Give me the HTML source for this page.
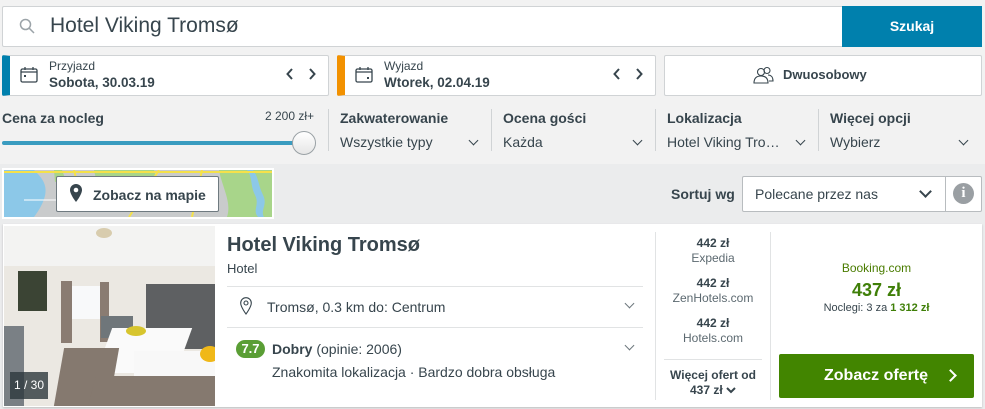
<!DOCTYPE html>
<html><head><meta charset="utf-8"><style>
*{box-sizing:border-box;margin:0;padding:0}
body{width:985px;height:409px;overflow:hidden;background:#ebeced;font-family:"Liberation Sans",sans-serif;color:#37454d;position:relative}
.a{position:absolute}
.top{left:0;top:0;width:985px;height:164px;background:#f2f2f2}
.box{background:#fff;border:1px solid #d0d3d5;border-radius:2px}
.lbl{font-size:14px;font-weight:bold;color:#37454d}
.val{font-size:14px;color:#37454d}
.chev{width:7px;height:7px;border-right:1.6px solid #37454d;border-bottom:1.6px solid #37454d;transform:rotate(45deg)}
.vl{width:1px;background:#d0d3d5}
</style></head><body>
<div class="a top"></div>
<div class="a box" style="left:2px;top:6px;width:842px;height:41px"></div>
<svg class="a" style="left:19px;top:18px" width="16" height="16" viewBox="0 0 16 16"><circle cx="6.5" cy="6.5" r="5" fill="none" stroke="#9ba3a8" stroke-width="1.5"/><path d="M10.2 10.2L15 15" stroke="#9ba3a8" stroke-width="1.5"/></svg>
<div class="a" style="left:50px;top:14px;font-size:21px;color:#37454d">Hotel Viking Tromsø</div>
<div class="a" style="left:842px;top:6px;width:140px;height:41px;background:#0080ad;color:#fff;font-weight:bold;font-size:14px;text-align:center;line-height:41px">Szukaj</div>
<div class="a box" style="left:2px;top:55px;width:327px;height:41px;border-left:8px solid #0080ad"></div>
<svg class="a" style="left:20px;top:67px" width="18" height="16" viewBox="0 0 18 16"><rect x="1" y="2" width="16" height="13" rx="1.5" fill="none" stroke="#37454d" stroke-width="1.3"/><path d="M1 5h16M5 0v3M13 0v3" stroke="#37454d" stroke-width="1.3"/><rect x="4" y="8" width="2" height="2" fill="#37454d"/></svg>
<div class="a" style="left:49px;top:59px;font-size:12px">Przyjazd</div>
<div class="a lbl" style="left:49px;top:75px;font-size:13.5px">Sobota, 30.03.19</div>
<svg class="a" style="left:286px;top:68px" width="30" height="12" viewBox="0 0 30 12"><path d="M6 1L1.5 6 6 11M24 1l4.5 5L24 11" fill="none" stroke="#37454d" stroke-width="2"/></svg>
<div class="a box" style="left:337px;top:55px;width:319px;height:41px;border-left:8px solid #f29100"></div>
<svg class="a" style="left:355px;top:67px" width="18" height="16" viewBox="0 0 18 16"><rect x="1" y="2" width="16" height="13" rx="1.5" fill="none" stroke="#37454d" stroke-width="1.3"/><path d="M1 5h16M5 0v3M13 0v3" stroke="#37454d" stroke-width="1.3"/><rect x="12" y="10" width="2" height="2" fill="#37454d"/></svg>
<div class="a" style="left:384px;top:59px;font-size:12px">Wyjazd</div>
<div class="a lbl" style="left:384px;top:75px;font-size:13.5px">Wtorek, 02.04.19</div>
<svg class="a" style="left:613px;top:68px" width="30" height="12" viewBox="0 0 30 12"><path d="M6 1L1.5 6 6 11M24 1l4.5 5L24 11" fill="none" stroke="#37454d" stroke-width="2"/></svg>
<div class="a box" style="left:664px;top:55px;width:318px;height:41px"></div>
<svg class="a" style="left:752px;top:66px" width="22" height="18" viewBox="0 0 22 18"><circle cx="9" cy="6" r="3.5" fill="none" stroke="#37454d" stroke-width="1.1"/><path d="M2 17c0-5 3-7 7-7s7 2 7 7z" fill="none" stroke="#37454d" stroke-width="1.1"/><circle cx="15" cy="4.5" r="3" fill="none" stroke="#37454d" stroke-width="1.1"/><path d="M16 9c3 0 5 2 5 6h-4" fill="none" stroke="#37454d" stroke-width="1.1"/></svg>
<div class="a lbl" style="left:783px;top:67px;font-size:13px">Dwuosobowy</div>
<div class="a lbl" style="left:2px;top:110px">Cena za nocleg</div>
<div class="a" style="left:265px;top:109px;font-size:12px">2 200 zł+</div>
<div class="a" style="left:2px;top:141px;width:300px;height:4px;border-radius:2px;background:#3a9cc0"></div>
<div class="a" style="left:292px;top:131px;width:24px;height:24px;border-radius:50%;background:linear-gradient(#fff,#e6e6e6);border:1px solid #9aa1a5"></div>
<div class="vl a" style="left:328px;top:109px;height:42px"></div>
<div class="vl a" style="left:491px;top:109px;height:42px"></div>
<div class="vl a" style="left:655px;top:109px;height:42px"></div>
<div class="vl a" style="left:818px;top:109px;height:42px"></div>
<div class="a lbl" style="left:340px;top:110px">Zakwaterowanie</div><div class="a val" style="left:340px;top:134px">Wszystkie typy</div><div class="a chev" style="left:470px;top:137px"></div>
<div class="a lbl" style="left:503px;top:110px">Ocena gości</div><div class="a val" style="left:503px;top:134px">Każda</div><div class="a chev" style="left:634px;top:137px"></div>
<div class="a lbl" style="left:667px;top:110px">Lokalizacja</div><div class="a val" style="left:667px;top:134px">Hotel Viking Tro…</div><div class="a chev" style="left:797px;top:137px"></div>
<div class="a lbl" style="left:830px;top:110px">Więcej opcji</div><div class="a val" style="left:830px;top:134px">Wybierz</div><div class="a chev" style="left:960px;top:137px"></div>
<div class="a" style="left:2px;top:168px;width:272px;height:51px;background:#fff;padding:2px">
<svg width="268" height="47" viewBox="0 0 268 47"><rect width="268" height="47" fill="#c9cbcc"/><path d="M0 0h30c10 10 20 20 0 47H0z" fill="#8cc8e8"/><path d="M50 0h8l3 8-10 4z" fill="#a8d58a"/><path d="M90 0h60l5 20-60 3z" fill="#a8d58a"/><path d="M215 0h53v47h-45c5-15-5-30-8-47z" fill="#a8d58a"/><path d="M243 0c6 8 3 15 8 25s-3 15 3 22h6c-4-7 4-12-1-22s-4-17-10-25z" fill="#8cc8e8"/><path d="M0 2h268M198 0l-10 47M155 0l-30 47M70 0l5 20" stroke="#f5e14a" stroke-width="2" fill="none"/><path d="M20 30h40M100 10l50 5M180 25h30" stroke="#fff" stroke-width="1" fill="none"/></svg></div>
<div class="a" style="left:56px;top:176px;width:163px;height:36px;background:#fff;border:1px solid #6f7a80;border-radius:2px"></div>
<svg class="a" style="left:70px;top:184px" width="12" height="18" viewBox="0 0 12 18"><path d="M6 0C2.7 0 0 2.7 0 6c0 4.5 6 12 6 12s6-7.5 6-12C12 2.7 9.3 0 6 0z" fill="#37454d"/><circle cx="6" cy="6" r="2.3" fill="#fff"/></svg>
<div class="a lbl" style="left:93px;top:187px">Zobacz na mapie</div>
<div class="a lbl" style="left:671px;top:186px">Sortuj wg</div>
<div class="a box" style="left:742px;top:176px;width:240px;height:36px;border-color:#b8bcbf"></div>
<div class="a val" style="left:755px;top:186px">Polecane przez nas</div>
<div class="a chev" style="left:921px;top:187px;width:9px;height:9px;border-width:2px"></div>
<div class="vl a" style="left:945px;top:177px;height:34px;background:#b8bcbf"></div>
<div class="a" style="left:953px;top:183px;width:21px;height:21px;border-radius:50%;background:#9a9fa3;color:#fff;font-weight:bold;font-size:15px;text-align:center;line-height:21px;font-family:'Liberation Serif',serif">i</div>
<div class="a" style="left:3px;top:224px;width:979px;height:183px;background:#fff;box-shadow:0 1px 2px rgba(0,0,0,.2)"></div>
<div class="a" style="left:4px;top:226px;width:211px;height:180px;overflow:hidden;background:#ebe8e2">
<div class="a" style="left:0;top:0;width:211px;height:40px;background:#f3f3f2"></div>
<div class="a" style="left:92px;top:2px;width:16px;height:10px;border-radius:50%;background:#d8ccae"></div>
<div class="a" style="left:14px;top:45px;width:29px;height:40px;background:#3b4434"></div>
<div class="a" style="left:57px;top:55px;width:11px;height:62px;background:#8a7c72"></div>
<div class="a" style="left:68px;top:60px;width:29px;height:33px;background:#f8f9fa"></div>
<div class="a" style="left:96px;top:56px;width:9px;height:60px;background:#8a7c72"></div>
<div class="a" style="left:142px;top:58px;width:69px;height:65px;background:#5e6062"></div>
<div class="a" style="left:97px;top:90px;width:32px;height:22px;background:#6f767a"></div>
<div class="a" style="left:0;top:100px;width:20px;height:80px;background:#7a8085"></div>
<div class="a" style="left:100px;top:102px;width:80px;height:45px;background:#fafafa;transform:skewX(-20deg)"></div>
<div class="a" style="left:55px;top:122px;width:55px;height:58px;background:#85796f;transform:skewX(-10deg)"></div>
<div class="a" style="left:122px;top:100px;width:20px;height:10px;border-radius:50%;background:#d7c52e"></div>
<div class="a" style="left:130px;top:125px;width:81px;height:55px;background:#f8f8f8"></div>
<div class="a" style="left:88px;top:150px;width:130px;height:30px;background:#85796f;transform:skewX(-15deg)"></div>
<div class="a" style="left:196px;top:120px;width:20px;height:16px;border-radius:50%;background:#f0b818"></div>
<div class="a" style="left:6px;top:146px;width:38px;height:27px;background:rgba(45,55,60,.8);color:#fff;font-size:12px;text-align:center;line-height:27px">1 / 30</div>
</div>
<div class="a" style="left:227px;top:234px;font-size:20px;font-weight:bold;color:#37454d">Hotel Viking Tromsø</div>
<div class="a val" style="left:227px;top:261px;font-size:13px">Hotel</div>
<div class="a" style="left:227px;top:286px;width:416px;height:1px;background:#e1e3e4"></div>
<svg class="a" style="left:240px;top:297px" width="12" height="18" viewBox="0 0 12 18"><path d="M6 .7C3 .7.7 3 .7 6c0 4 5.3 11 5.3 11s5.3-7 5.3-11C11.3 3 9 .7 6 .7z" fill="none" stroke="#37454d" stroke-width="1.1"/><circle cx="6" cy="6" r="2" fill="none" stroke="#37454d" stroke-width="1.1"/></svg>
<div class="a val" style="left:267px;top:299px">Tromsø, 0.3 km do: Centrum</div>
<div class="a chev" style="left:626px;top:300px;border-color:#6d777d"></div>
<div class="a" style="left:227px;top:327px;width:416px;height:1px;background:#e1e3e4"></div>
<div class="a" style="left:236px;top:340px;width:29px;height:18px;border-radius:9px;background:#5a9e35;color:#fff;font-weight:bold;font-size:13px;text-align:center;line-height:18px">7.7</div>
<div class="a val" style="left:272px;top:341px"><b>Dobry</b> (opinie: 2006)</div>
<div class="a chev" style="left:626px;top:342px;border-color:#6d777d"></div>
<div class="a val" style="left:272px;top:364px">Znakomita lokalizacja · Bardzo dobra obsługa</div>
<div class="vl a" style="left:655px;top:232px;height:168px;background:#e1e3e4"></div>
<div class="vl a" style="left:770px;top:232px;height:168px;background:#e1e3e4"></div>
<div class="a" style="left:656px;top:236px;width:114px;text-align:center;font-size:12px;line-height:15px;color:#5c6970"><b style="color:#37454d">442 zł</b><br>Expedia<br><div style="height:10px"></div><b style="color:#37454d">442 zł</b><br>ZenHotels.com<br><div style="height:10px"></div><b style="color:#37454d">442 zł</b><br>Hotels.com</div>
<div class="a" style="left:664px;top:359px;width:98px;height:1px;background:#e1e3e4"></div>
<div class="a" style="left:656px;top:368px;width:114px;text-align:center;font-size:12px;font-weight:bold;line-height:15px;color:#37454d">Więcej ofert od<br>437 zł <svg width="10" height="8" viewBox="0 0 10 8"><path d="M1 2l4 4 4-4" fill="none" stroke="#37454d" stroke-width="2"/></svg></div>
<div class="a" style="left:771px;top:261px;width:211px;text-align:center;font-size:12px;color:#4a7c00">Booking.com</div>
<div class="a" style="left:771px;top:280px;width:211px;text-align:center;font-size:18px;font-weight:bold;color:#3f7f08">437 zł</div>
<div class="a" style="left:771px;top:302px;width:211px;text-align:center;font-size:11px;color:#37454d">Noclegi: 3 za <b style="color:#3f7f08">1 312 zł</b></div>
<div class="a" style="left:779px;top:354px;width:195px;height:44px;background:#428500;border-radius:2px;color:#fff;font-size:16px;font-weight:bold;line-height:44px;padding-left:45px">Zobacz ofertę</div>
<div class="a" style="left:946px;top:371px;width:9px;height:9px;border-right:2px solid #fff;border-top:2px solid #fff;transform:rotate(45deg)"></div>
</body></html>
